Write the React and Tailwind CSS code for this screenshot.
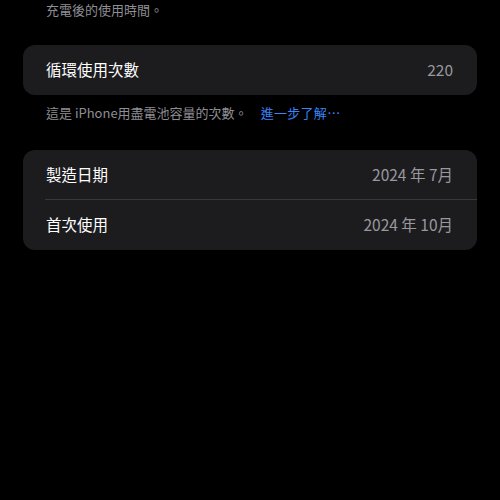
const font = { fontFamily: '"Noto Sans CJK TC", "Noto Sans", sans-serif' };

function Row({ label, value, divider }) {
  return (
    <div className="relative flex h-[50px] items-center justify-between pl-[23px] pr-[24px]">
      <span className="text-[15.5px] text-white">{label}</span>
      <span className="text-[15.5px] text-[#98989e]">{value}</span>
      {divider && <div className="absolute bottom-0 left-[22px] right-0 h-px bg-[#38383a]" />}
    </div>
  );
}

export default function App() {
  return (
    <div className="min-h-[500px] w-[500px] bg-black pt-[1px]" style={font}>
      <p className="px-[46px] text-[13px] leading-[18px] text-[#8e8e93]">充電後的使用時間。</p>

      <div className="mx-[23px] mt-[26px] overflow-hidden rounded-[12px] bg-[#1c1c1e]">
        <Row label="循環使用次數" value="220" />
      </div>
      <p className="mt-[9px] px-[46px] text-[13px] leading-[18px] text-[#8e8e93]">
        這是 iPhone用盡電池容量的次數。
        <span className="ml-[13px] tracking-[0.3px] text-[#3a82f7]">進一步了解⋯</span>
      </p>

      <div className="mx-[23px] mt-[28px] overflow-hidden rounded-[12px] bg-[#1c1c1e]">
        <Row label="製造日期" value="2024 年 7月" divider />
        <Row label="首次使用" value="2024 年 10月" />
      </div>
    </div>
  );
}
